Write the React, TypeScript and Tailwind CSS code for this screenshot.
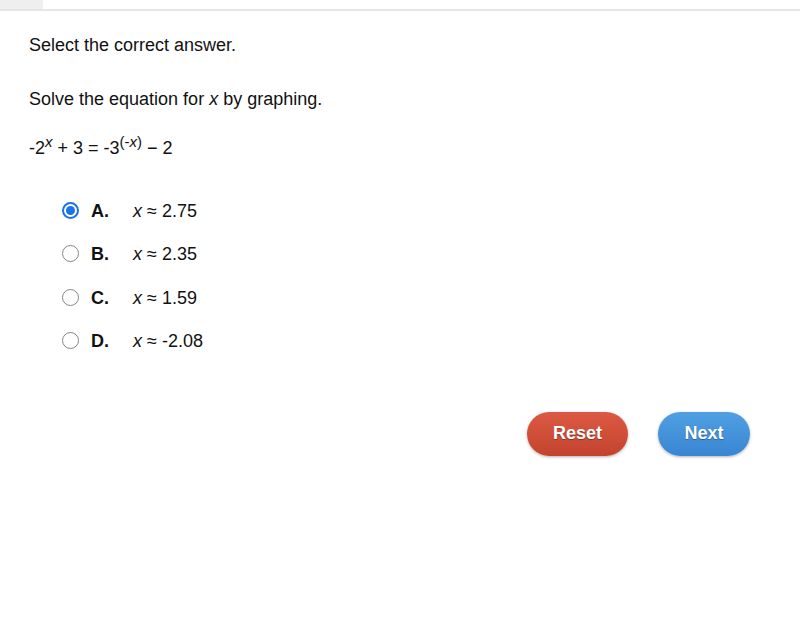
import React from "react";

const options = [
  { l: "A.", v: "2.75", sel: true },
  { l: "B.", v: "2.35", sel: false },
  { l: "C.", v: "1.59", sel: false },
  { l: "D.", v: "-2.08", sel: false },
];

function Radio({ sel }: { sel: boolean }) {
  return sel ? (
    <span className="flex h-[17px] w-[17px] items-center justify-center rounded-full border-2 border-[#1a73e8] bg-white">
      <span className="h-[9px] w-[9px] rounded-full bg-[#1a73e8]" />
    </span>
  ) : (
    <span className="h-[17px] w-[17px] rounded-full border border-[#858585] bg-white" />
  );
}

export default function App() {
  return (
    <div className="h-[630px] w-[800px] bg-white text-[#111] font-['Liberation_Sans',Arial,sans-serif] text-[18px]">
      <div className="flex h-[11px] border-b-2 border-[#e6e6e6]">
        <div className="h-full w-[43px] bg-[#efefef]" />
      </div>
      <div className="pl-[29px] pt-[24px]">
        <p className="leading-[20px]">Select the correct answer.</p>
        <p className="mt-[34px] leading-[20px]">
          Solve the equation for <i>x</i> by graphing.
        </p>
        <p className="mt-[29px] leading-[20px]">
          -2<sup className="text-[15px] italic relative top-[-7px]">x</sup> + 3 = -3
          <sup className="text-[15px] relative top-[-7px]">
            (-<i>x</i>)
          </sup>{" "}
          − 2
        </p>
        <div className="mt-[43px] flex flex-col gap-[23.5px] pl-[33px]">
          {options.map((o) => (
            <div key={o.l} className="flex h-[20px] items-center">
              <span className="flex w-[29px] items-center -translate-y-[1px]">
                <Radio sel={o.sel} />
              </span>
              <span className="w-[42px] font-bold">{o.l}</span>
              <span>
                <i>x</i> ≈ {o.v}
              </span>
            </div>
          ))}
        </div>
      </div>
      <div className="mt-[60px] flex justify-end gap-[30px] pr-[50px]">
        <button className="h-[44px] w-[101px] rounded-full bg-gradient-to-b from-[#dc5a43] to-[#c3432e] text-[18px] font-bold text-white shadow-[0_1px_3px_rgba(0,0,0,0.3)] [text-shadow:0_1px_1px_rgba(0,0,0,0.35)]">
          Reset
        </button>
        <button className="h-[44px] w-[92px] rounded-full bg-gradient-to-b from-[#4fa0e3] to-[#3a85d2] text-[18px] font-bold text-white shadow-[0_1px_3px_rgba(0,0,0,0.3)] [text-shadow:0_1px_1px_rgba(0,0,0,0.35)]">
          Next
        </button>
      </div>
    </div>
  );
}
